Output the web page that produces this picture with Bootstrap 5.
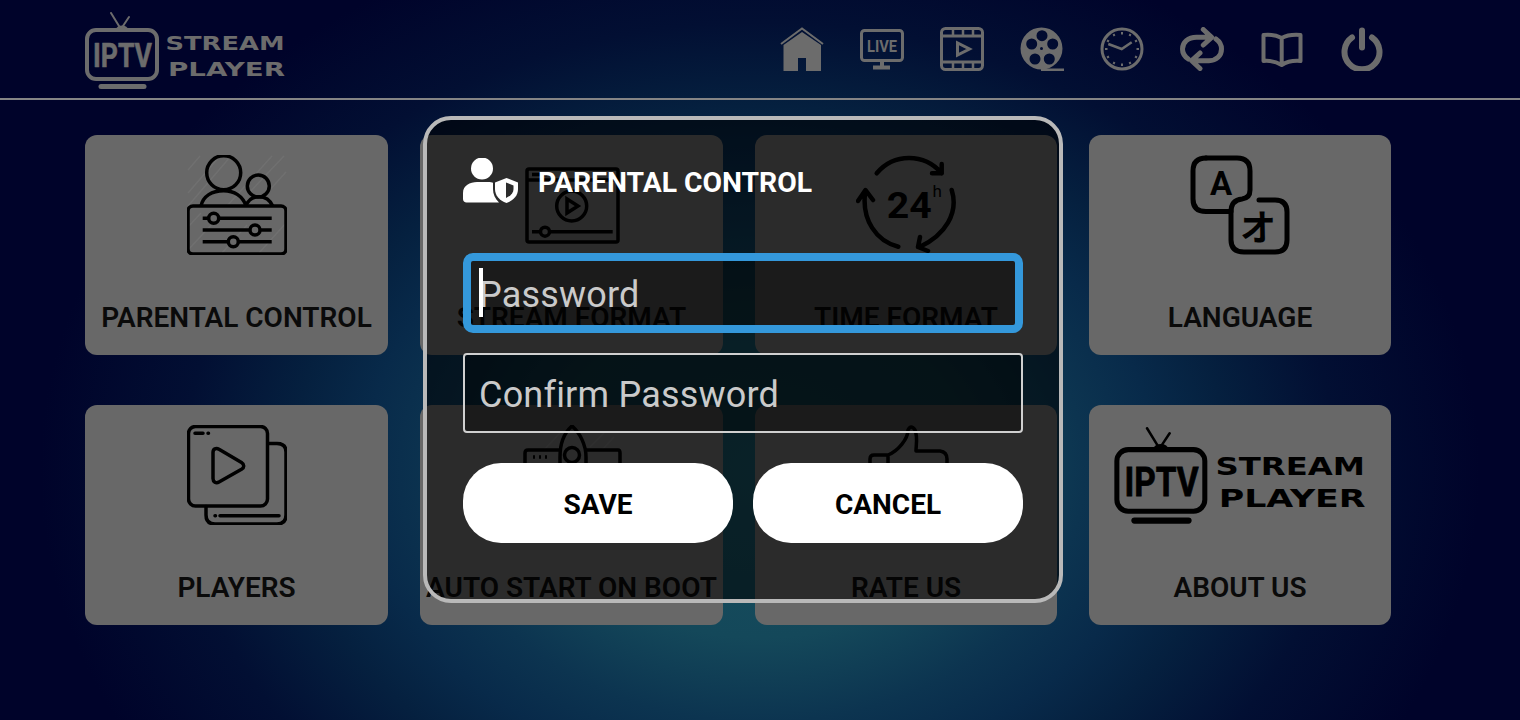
<!DOCTYPE html>
<html lang="en">
<head>
    <meta charset="UTF-8">
    <title>IPTV Stream Player</title>
    <link href="https://cdn.jsdelivr.net/npm/bootstrap@5.3.0/dist/css/bootstrap.min.css" rel="stylesheet">
    <style>
        html, body { height: 100%; }
        body {
            width: 1520px; height: 720px; overflow: hidden; position: relative;
            font-family: Roboto, "Liberation Sans", sans-serif;
            background: radial-gradient(ellipse 720px 560px at 760px 470px, #17505f 0%, #14485a 30%, #0c3450 45%, #082a4a 55%, #05203f 65%, #020f33 80%, #00032a 100%);
            background-color: #00032a;
        }
        .top-bar { height: 100px; padding: 0 136px 0 85px; border-bottom: 2px solid #858585; color: #6c6c6c; }
        .top-logo { width: 200px; height: 78px; margin-top: 4px; }
        .top-icons { gap: 36px; }
        .top-icons svg { width: 44px; height: 44px; display: block; }
        .tile-grid {
            display: grid; grid-template-columns: 303px 303px 302px 302px; gap: 50px 32px;
            margin: 35px 0 0 85px;
        }
        .tile {
            height: 220px; padding-top: 20px; background: #686868; border-radius: 12px; color: #000;
        }
        .tile svg.pic { width: 100px; height: 100px; display: block; }
        .tile svg.wide { width: 252px; height: 98px; margin-top: 2px; }
        .tile-label { margin-top: auto; padding-bottom: 19px; font-size: 28px; line-height: 36px; font-weight: 600; color: #0a0a0a; white-space: nowrap; }
        .dialog-box {
            position: absolute; left: 423px; top: 116px; width: 640px; height: 487px; z-index: 5;
            padding: 38px 36px 0; border: 4px solid #b9b9b9; border-radius: 28px; background: rgba(0, 0, 0, .58);
        }
        .dialog-head { height: 46px; margin-bottom: 49px; gap: 20px; color: #fff; }
        .dialog-head svg { width: 55px; height: 46px; }
        .dialog-title { font-size: 28.3px; font-weight: 700; line-height: 1; padding-top: 4px; }
        .pin-input.form-control {
            height: 80px; border-radius: 4px; background: rgba(0, 0, 0, .36); color: #ccc;
            border: 2px solid #d0d0d0; padding: 4px 14px 0; font-size: 36px; letter-spacing: .2px; box-shadow: none;
        }
        .pin-input.form-control::placeholder { color: #cacaca; opacity: 1; }
        .pin-input.active-field { border: 8px solid #3498db; border-radius: 10px; padding: 4px 8px 0; }
        .pin-wrap { position: relative; margin-bottom: 20px; }
        .pin-caret { position: absolute; left: 16px; top: 15px; width: 4px; height: 49px; background: #fff; }
        .dialog-btns { gap: 20px; margin-top: 30px; }
        .pill-btn.btn {
            flex: 1; height: 80px; background: #fff; color: #000; border: 0; border-radius: 38px;
            font-size: 28px; font-weight: 700; padding: 4px 0 0;
        }
    </style>
</head>
<body>

<!-- top bar -->
<div class="top-bar d-flex align-items-center justify-content-between">
    <svg class="top-logo" viewBox="0 0 200 78" fill="none" stroke="currentColor" stroke-linecap="round">
        <path d="M26 1 34 14M44 5 38 14" stroke-width="2"/>
        <path d="M31 17.500a6 4 0 0 1 12 0z" fill="currentColor" stroke="none"/>
        <rect x="2" y="18" width="70" height="49" rx="9" stroke-width="4"/>
        <path d="M16 74.500H59" stroke-width="5"/>
        <text x="8" y="55" font-family="Roboto" font-weight="700" font-size="33" fill="currentColor" stroke="currentColor" stroke-width=".6" textLength="59" lengthAdjust="spacingAndGlyphs">IPTV</text>
        <text x="80.500" y="38" font-family="DejaVu Sans" font-weight="700" font-size="20" fill="currentColor" stroke="none" textLength="119" lengthAdjust="spacingAndGlyphs">STREAM</text>
        <text x="83" y="64" font-family="DejaVu Sans" font-weight="700" font-size="20" fill="currentColor" stroke="none" textLength="117" lengthAdjust="spacingAndGlyphs">PLAYER</text>
    </svg>
    <div class="top-icons d-flex">
        <svg viewBox="0 0 44 44" fill="currentColor">
            <path d="M1 17 22 1.500 43 17" fill="none" stroke="currentColor" stroke-width="2"/>
            <path d="M3.500 18 22 5 41 18V44H26V31H18V44H3.500z"/>
        </svg>
        <svg viewBox="0 0 44 44" fill="none" stroke="currentColor">
            <rect x="1.500" y="3.500" width="41" height="30" rx="3" stroke-width="3"/>
            <path d="M22 34V39M13 40.500H30" stroke-width="4"/>
            <text x="7" y="24.500" font-family="Roboto" font-weight="700" font-size="17" fill="currentColor" stroke="none" textLength="30" lengthAdjust="spacingAndGlyphs">LIVE</text>
        </svg>
        <svg viewBox="0 0 44 44" fill="none" stroke="currentColor" stroke-width="3">
            <rect x="1.500" y="1.500" width="41" height="41" rx="4"/>
            <path d="M1.500 9H42.500M1.500 35H42.500"/>
            <path d="M13 2V9M23 2V9M33 2V9M13 35V42M23 35V42M33 35V42" stroke-width="2.500"/>
            <path d="M17.500 16V28L29.500 22z"/>
        </svg>
        <svg viewBox="0 0 44 44" fill="currentColor">
            <path fill-rule="evenodd" d="M0.500 21.500a21 21 0 1 0 42 0a21 21 0 1 0-42 0zM16.500 8.700a5.500 5.500 0 1 0 11 0a5.500 5.500 0 1 0-11 0zM6.200 17a5.500 5.500 0 1 0 11 0a5.500 5.500 0 1 0-11 0zM27.200 17a5.500 5.500 0 1 0 11 0a5.500 5.500 0 1 0-11 0zM9.500 32a5.500 5.500 0 1 0 11 0a5.500 5.500 0 1 0-11 0zM23.800 32a5.500 5.500 0 1 0 11 0a5.500 5.500 0 1 0-11 0zM20 21.500a1.500 1.500 0 1 0 3 0a1.500 1.500 0 1 0-3 0z"/>
            <path d="M21 41.500H44V44H21z"/>
        </svg>
        <svg viewBox="0 0 44 44" fill="none" stroke="currentColor">
            <circle cx="22" cy="22" r="20" stroke-width="3"/>
            <path d="M22 5V7.500M22 36.500V39M5 22H7.500M36.500 22H39M13.500 7 14.500 9M30.500 7 29.500 9M13.500 37 14.500 35M30.500 37 29.500 35M7 13.500 9 14.500M37 13.500 35 14.500M7 30.500 9 29.500M37 30.500 35 29.500" stroke-width="2"/>
            <path d="M8.300 17 21.700 22 31.700 15.300" stroke-width="2.500"/>
        </svg>
        <svg viewBox="0 0 44 44" fill="none" stroke="currentColor" stroke-width="5" stroke-linecap="round" stroke-linejoin="round">
            <path d="M23.300 2.500 31.700 10.300 23.300 18M31 10.300H16.500C8 10.300 2.500 15.500 2.500 22C2.500 26 4.500 29.500 8.300 32"/>
            <path d="M20 26 11.700 33.700 20 41.500M12 33.700H29C36.500 33.700 41.500 28.500 41.500 22C41.500 18 39.500 14.500 36 12"/>
        </svg>
        <svg viewBox="0 0 44 44" fill="none" stroke="currentColor" stroke-width="4" stroke-linejoin="round">
            <path d="M21.700 11C16 8 8 7.500 3.500 8V34C9 33.500 16 34.500 21.700 38C27 34.500 34 33.500 40.500 34V8C34 7.500 27 8 21.700 11ZM21.700 11V38"/>
        </svg>
        <svg viewBox="0 0 44 44" fill="none" stroke="currentColor" stroke-width="6" stroke-linecap="round">
            <path d="M22 3.500V20.500"/>
            <path d="M12 10.500A17.500 17.500 0 1 0 32 10.500"/>
        </svg>
    </div>
</div>

<!-- tiles -->
<div class="tile-grid">
    <div class="tile d-flex flex-column align-items-center">
        <svg class="pic" viewBox="0 0 100 100" fill="none" stroke="currentColor" stroke-width="3.500">
            <path d="M1 15 13 1M1 38 33 1M1 51 44 1M40 51 85 1M62 38 97 1M80 38 99 17M1 72 14 58M1 95 28 66M35 98 60 70M72 98 99 68" stroke="#707070" stroke-width="1.500"/>
            <circle cx="36.700" cy="17.700" r="17"/>
            <circle cx="71.300" cy="31" r="11"/>
            <path d="M14 51C16 41 25 35.700 36.700 35.700C47 35.700 56 41 59 51"/>
            <path d="M59 51C61 45 66 41.700 72 41.700C78 41.700 83 45 85.700 51"/>
            <rect x="1" y="51" width="98" height="48" rx="5"/>
            <path d="M15.700 63.300H84.700M15.700 75H84.700M15.700 86.700H84.700"/>
            <circle cx="26.700" cy="63.300" r="5" fill="#686868"/>
            <circle cx="68" cy="75" r="5" fill="#686868"/>
            <circle cx="46.300" cy="86.700" r="5" fill="#686868"/>
        </svg>
        <div class="tile-label">PARENTAL CONTROL</div>
    </div>
    <div class="tile d-flex flex-column align-items-center">
        <svg class="pic" viewBox="0 0 100 100" fill="none" stroke="currentColor" stroke-width="3.500">
            <rect x="5" y="14" width="91" height="73" rx="2"/>
            <path d="M5 25H96M10 19.500H18M22 19.500H25M10 76.700H90.700"/>
            <circle cx="49.700" cy="51" r="15"/>
            <path d="M45 44V58L56 51z"/>
            <circle cx="23" cy="76.700" r="4.500" fill="#686868"/>
        </svg>
        <div class="tile-label">STREAM FORMAT</div>
    </div>
    <div class="tile d-flex flex-column align-items-center">
        <svg class="pic" viewBox="0 0 100 100" fill="none" stroke="currentColor" stroke-width="4.500" stroke-linecap="round" stroke-linejoin="round">
            <path d="M20.700 18.300C38 -2 68 -2 85.700 18.300M76 18.300H85.700V9"/>
            <path d="M95.700 35C103 58 89 80 64 91.700M64 82 62 92 72 96"/>
            <path d="M42.300 91.700C20 86 6 65 9 38.300M2 46 9.500 35 17 45"/>
            <text x="30.700" y="63.300" font-family="Roboto" font-weight="700" font-size="37" fill="currentColor" stroke="none" textLength="45" lengthAdjust="spacingAndGlyphs">24</text>
            <text x="76.500" y="42" font-family="Roboto" font-size="17" fill="currentColor" stroke="none">h</text>
        </svg>
        <div class="tile-label">TIME FORMAT</div>
    </div>
    <div class="tile d-flex flex-column align-items-center">
        <svg class="pic" viewBox="0 0 100 100" fill="none" stroke="currentColor" stroke-width="5" stroke-linecap="round">
            <path d="M16 3H47Q60 3 60 16V35Q60 43 52 44Q41 45 41 57V85Q41 97 54 97H85Q97 97 97 85V57Q97 45 85 45H69"/>
            <path d="M41 56.500H16Q3 56.500 3 44V16Q3 3 16 3"/>
            <text x="31" y="40" text-anchor="middle" font-family="Roboto" font-weight="700" font-size="33" fill="currentColor" stroke="none">A</text>
            <text x="68" y="86" text-anchor="middle" font-family="'Noto Sans CJK JP'" font-weight="700" font-size="36" fill="currentColor" stroke="none">オ</text>
        </svg>
        <div class="tile-label">LANGUAGE</div>
    </div>

    <div class="tile d-flex flex-column align-items-center">
        <svg class="pic" viewBox="0 0 100 100" fill="none" stroke="currentColor" stroke-width="3.500" stroke-linecap="round" stroke-linejoin="round">
            <rect x="1.500" y="1.500" width="79" height="79.500" rx="7"/>
            <path d="M81 18.500H90Q99 18.500 99 27V90Q99 99 90 99H28Q19 99 19 90V81.500"/>
            <path d="M26 27.500C26 24 29 22.500 32 24.300L54.500 37.500C57.500 39.300 57.500 42.500 54.500 44.300L32 57C29 58.800 26 57 26 53.500z"/>
            <path d="M8 8.300H16M21 8.300H21.500M28 90.700H28.500M33 90.700H92"/>
        </svg>
        <div class="tile-label">PLAYERS</div>
    </div>
    <div class="tile d-flex flex-column align-items-center">
        <svg class="pic" viewBox="0 0 100 100" fill="none" stroke="currentColor" stroke-width="3.500">
            <path d="M22 25 38 8M68 22 82 8M80 25 92 12" stroke="#707070" stroke-width="1.500"/>
            <path d="M50 1C42 8 38 20 38 32V60H64V32C64 20 58 8 50 1z"/>
            <circle cx="50" cy="30" r="7.500"/>
            <path d="M38 25H6Q3 25 3 28V50H38M64 25H96Q98 25 98 28V50H64"/>
            <path d="M11 32H13M17 32H19M23 32H25"/>
        </svg>
        <div class="tile-label">AUTO START ON BOOT</div>
    </div>
    <div class="tile d-flex flex-column align-items-center">
        <svg class="pic" viewBox="0 0 100 100" fill="none" stroke="currentColor" stroke-width="3.500" stroke-linejoin="round">
            <path d="M14 60V34Q14 30 18 30H32C42 26 52 14 52 5Q55 -1 59 5C62 12 60 20 60 26H84Q91 27 91 34V60H14M32 30V60"/>
        </svg>
        <div class="tile-label">RATE US</div>
    </div>
    <div class="tile d-flex flex-column align-items-center">
        <svg class="pic wide" viewBox="0 0 200 78" fill="none" stroke="currentColor" stroke-linecap="round">
            <path d="M26 1 34 14M44 5 38 14" stroke-width="2"/>
            <path d="M31 17.500a6 4 0 0 1 12 0z" fill="currentColor" stroke="none"/>
            <rect x="2" y="18" width="70" height="49" rx="9" stroke-width="4"/>
            <path d="M16 74.500H59" stroke-width="5"/>
            <text x="8" y="55" font-family="Roboto" font-weight="700" font-size="33" fill="currentColor" stroke="currentColor" stroke-width=".6" textLength="59" lengthAdjust="spacingAndGlyphs">IPTV</text>
            <text x="80.500" y="38" font-family="DejaVu Sans" font-weight="700" font-size="20" fill="currentColor" stroke="none" textLength="119" lengthAdjust="spacingAndGlyphs">STREAM</text>
            <text x="83" y="64" font-family="DejaVu Sans" font-weight="700" font-size="20" fill="currentColor" stroke="none" textLength="117" lengthAdjust="spacingAndGlyphs">PLAYER</text>
        </svg>
        <div class="tile-label">ABOUT US</div>
    </div>
</div>

<!-- password dialog -->
<div class="dialog-box">
    <div class="dialog-head d-flex align-items-center">
        <svg viewBox="0 0 55 46" fill="currentColor">
            <circle cx="19" cy="10.500" r="11"/>
            <path d="M0 41V35C0 27.500 7 24 14 24H25C27.500 24 29 24.300 30 24.700L30 31C30 36 32 41 36 44.500H3.500C1.500 44.500 0 43 0 41z"/>
            <path d="M43.500 20 55 24.500V31C55 37.500 50.500 42.500 43.500 45C36.500 42.500 32 37.500 32 31V24.500z"/>
            <path d="M43 24.500 50.500 27.500V31C50.500 35 47.500 38 43 40z" fill="#2c2c2c"/>
        </svg>
        <div class="dialog-title">PARENTAL CONTROL</div>
    </div>
    <div class="pin-wrap">
        <input class="form-control pin-input active-field" type="password" placeholder="Password">
        <span class="pin-caret"></span>
    </div>
    <div class="pin-wrap">
        <input class="form-control pin-input" type="password" placeholder="Confirm Password">
    </div>
    <div class="dialog-btns d-flex">
        <button class="btn pill-btn" type="button">SAVE</button>
        <button class="btn pill-btn" type="button">CANCEL</button>
    </div>
</div>

<script src="https://cdn.jsdelivr.net/npm/bootstrap@5.3.0/dist/js/bootstrap.bundle.min.js"></script>
</body>
</html>
